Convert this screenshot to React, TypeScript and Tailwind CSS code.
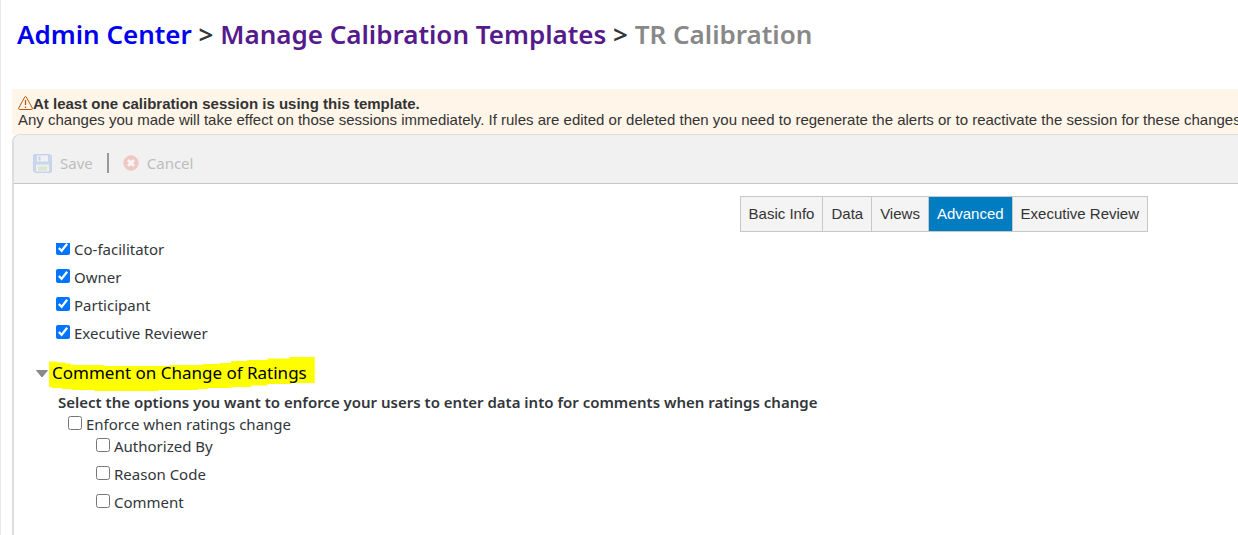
import { useState } from "react";

const tabs = ["Basic Info", "Data", "Views", "Advanced", "Executive Review"];
const roles = ["Co-facilitator", "Owner", "Participant", "Executive Reviewer"];
const commentFields = ["Authorized By", "Reason Code", "Comment"];

function WarningIcon() {
  return (
    <svg className="h-4 w-[15px] shrink-0" viewBox="0 0 15 16" fill="none" stroke="#b45a14" aria-hidden="true">
      <path d="M6.8 .9 L.7 12.1 Q.3 13.5 1.6 13.5 H13.4 Q14.7 13.5 14.3 12.1 L8.2 .9 Q7.5 0 6.8 .9 Z" />
      <path d="M7.5 4 V9 M7.5 10.4 V11.9" strokeWidth="1.3" />
    </svg>
  );
}

function SaveIcon() {
  return (
    <svg className="h-[19px] w-[19px]" viewBox="0 0 19 19" aria-hidden="true">
      <path d="M1 .5 H17 L18.5 2 V17 Q18.5 18.5 17 18.5 H2 L.5 17 V1 Z" fill="#cbd6e9" stroke="#c6d3e8" />
      <rect x="4" y="1.5" width="11" height="6" fill="#eef1f5" />
      <rect x="5.5" y="2.5" width="2" height="4" fill="#c9d4e3" />
      <rect x="3" y="10.5" width="13" height="7" fill="#edf0ee" />
      <rect x="5" y="12.5" width="9" height="4" fill="#dbe5d6" />
    </svg>
  );
}

function CancelIcon() {
  return (
    <svg className="h-4 w-4" viewBox="0 0 16 16" aria-hidden="true">
      <circle cx="8" cy="8" r="7.4" fill="#efc6c1" stroke="#f0d3cf" />
      <path d="M5 5 L11 11 M11 5 L5 11" stroke="#f7f4f4" strokeWidth="3" />
    </svg>
  );
}

function CheckRow({ id, label, defaultChecked = false, className = "" }: {
  id: string;
  label: string;
  defaultChecked?: boolean;
  className?: string;
}) {
  return (
    <div className={`flex items-center gap-1 ${className}`}>
      <input id={id} type="checkbox" defaultChecked={defaultChecked} className="mb-[3px] size-3.5 shrink-0 accent-[#0075ff]" />
      <label htmlFor={id}>{label}</label>
    </div>
  );
}

export default function App() {
  const [active, setActive] = useState("Advanced");
  const [open, setOpen] = useState(true);

  return (
    <div className="flex min-h-screen flex-col overflow-hidden border-l border-[#e8e8e8] bg-white pl-[11px] font-['Noto_Sans',sans-serif] text-[15px] leading-5 text-[#32363a]">
      <h1 className="mb-[37px] pt-[17px] pl-[5px] text-[26px] leading-[35px] font-semibold whitespace-nowrap">
        <a href="#admin" className="text-[#0000ee]">Admin Center</a>
        {" > "}
        <a href="#templates" className="text-[#551a8b]">Manage Calibration Templates</a>
        {" > "}
        <span className="text-[#888888]">TR Calibration</span>
      </h1>

      <div role="alert" className="bg-[#fff5e8] pt-[7px] pb-[6px] pl-[6px] font-['Liberation_Sans',sans-serif] text-[15px] leading-4 whitespace-nowrap text-[#333333]">
        <p className="flex items-center font-bold">
          <WarningIcon />
          At least one calibration session is using this template.
        </p>
        <p>
          Any changes you made will take effect on those sessions immediately. If rules are edited or deleted then you need to regenerate the alerts or to reactivate the session for these changes to take effect.
        </p>
      </div>

      <main className="flex-1 rounded-tl-lg border-t border-l-2 border-[#dddddd]">
        <div className="flex h-[49px] items-center gap-[14px] rounded-tl-lg border-b border-[#c6c6c6] bg-[#f1f1f1] pt-2 pl-[19px] text-[#bdbdbd]">
          <button type="button" className="flex items-center gap-2">
            <SaveIcon />
            Save
          </button>
          <span className="h-5 w-0.5 bg-[#999999]" />
          <button type="button" className="flex items-center gap-2">
            <CancelIcon />
            Cancel
          </button>
        </div>

        <nav className="mt-3 mr-[90px] flex justify-end font-['Liberation_Sans',sans-serif] text-[15px]">
          <div className="flex divide-x divide-[#c8c8c8] border border-[#c8c8c8]">
            {tabs.map((tab) => (
              <button
                key={tab}
                type="button"
                onClick={() => setActive(tab)}
                className={`h-[34px] px-2 ${tab === active ? "bg-[#007cc0] text-white" : "bg-[#f4f4f4] text-[#333333]"}`}
              >
                {tab}
              </button>
            ))}
          </div>
        </nav>

        <div className="mt-[11px] overflow-hidden">
          <div className="-mt-2 pl-[42px]">
            {roles.map((role) => (
              <CheckRow key={role} id={role} label={role} defaultChecked className="h-7" />
            ))}
          </div>
        </div>

        <section className="mt-[9px] pl-[22px]">
          <h2 className="flex h-[34px] items-center text-[17px] text-black">
            <button type="button" onClick={() => setOpen(!open)} className="flex items-center gap-px" aria-expanded={open}>
              <svg className="h-2 w-3" viewBox="0 0 12 8" aria-hidden="true">
                <path d="M.5 1.5 H11.5 L6 8 Z" fill="#8a8a8a" stroke="#707070" strokeWidth=".7" />
              </svg>
              <span className="relative pr-2 pl-[3px]">
                <svg className="absolute -top-[6px] left-0 h-[34px] w-full" viewBox="0 0 264 34" preserveAspectRatio="none" aria-hidden="true">
                  <path d="M0 4.5 H8 V5.5 H16 V6.5 H22 V8 H54 V9 H120 V8 H153 V7 H170 V6 H181 V4 H197 V3 H217 V1.5 H239 V0 H264 V26 H241 V27 H217 V28.5 H201 V30 H181 V31 H158 V32 H148 V33 H109 V34 H45 V33 H23 V32 H13 V31 H3 V30 H0 Z" fill="#ffff00" />
                </svg>
                <span className="relative">Comment on Change of Ratings</span>
              </span>
            </button>
          </h2>
          {open && (
            <fieldset className="pt-0.5 pl-[22px]">
              <legend className="float-left mb-1 w-full font-semibold whitespace-nowrap">
                Select the options you want to enforce your users to enter data into for comments when ratings change
              </legend>
              <CheckRow id="enforce" label="Enforce when ratings change" className="clear-both h-4 pl-[10px]" />
              <div className="pl-[38px]">
                {commentFields.map((field) => (
                  <CheckRow key={field} id={field} label={field} className="h-7" />
                ))}
              </div>
            </fieldset>
          )}
        </section>
      </main>
    </div>
  );
}
